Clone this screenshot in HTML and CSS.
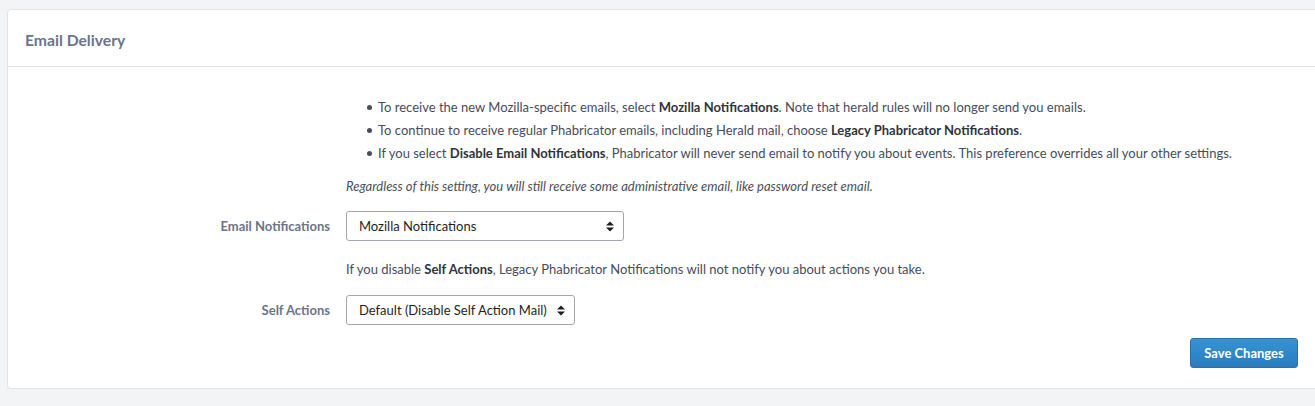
FILE: index.html
```html
<!DOCTYPE html>
<html>
<head>
<meta charset="utf-8">
<link rel="stylesheet" href="styles.css">
</head>
<body>
<div class="card">
  <div class="card-header">Email Delivery</div>
  <form class="card-body">
    <div class="row">
      <div class="label"></div>
      <div class="control">
        <ul class="bullets">
          <li>To receive the new Mozilla-specific emails, select <b>Mozilla Notifications</b>. Note that herald rules will no longer send you emails.</li>
          <li>To continue to receive regular Phabricator emails, including Herald mail, choose <b>Legacy Phabricator Notifications</b>.</li>
          <li>If you select <b>Disable Email Notifications</b>, Phabricator will never send email to notify you about events. This preference overrides all your other settings.</li>
        </ul>
        <p class="note">Regardless of this setting, you will still receive some administrative email, like password reset email.</p>
      </div>
    </div>
    <div class="row row-select">
      <label class="label">Email Notifications</label>
      <div class="control">
        <div class="select select-wide">
          <span>Mozilla Notifications</span>
          <svg class="arrows" width="8" height="11" viewBox="0 0 8 11"><path d="M0 4.5 L4 0.5 L8 4.5 Z M0 6.5 L4 10.5 L8 6.5 Z" fill="#1c1e22"/></svg>
        </div>
      </div>
    </div>
    <div class="row row-help">
      <div class="label"></div>
      <div class="control"><p class="help">If you disable <b>Self Actions</b>, Legacy Phabricator Notifications will not notify you about actions you take.</p></div>
    </div>
    <div class="row row-select">
      <label class="label">Self Actions</label>
      <div class="control">
        <div class="select">
          <span>Default (Disable Self Action Mail)</span>
          <svg class="arrows" width="8" height="11" viewBox="0 0 8 11"><path d="M0 4.5 L4 0.5 L8 4.5 Z M0 6.5 L4 10.5 L8 6.5 Z" fill="#1c1e22"/></svg>
        </div>
      </div>
    </div>
    <div class="actions">
      <button type="button" class="btn">Save Changes</button>
    </div>
  </form>
</div>
</body>
</html>
```

FILE: styles.css
```css
html, body {
  margin: 0;
  padding: 0;
}
body {
  background: #f3f4f6;
  font-family: Lato, "Open Sans", sans-serif;
  font-size: 13px;
  color: #464c5c;
  padding-top: 9px;
  padding-left: 7px;
  overflow: hidden;
}
.card {
  background: #fff;
  border: 1px solid #e2e3e7;
  border-radius: 4px;
  width: 1320px;
  height: 380px;
  box-sizing: border-box;
  box-shadow: 0 1px 1px rgba(0,0,0,0.03);
}
.card-header {
  height: 57px;
  box-sizing: border-box;
  border-bottom: 1px solid #e2e3e7;
  padding: 21px 0 0 17px;
  font-size: 15.7px;
  font-weight: bold;
  color: #6b748c;
  line-height: 18px;
}
.card-body {
  display: flex;
  flex-direction: column;
  padding-top: 29px;
}
.row {
  display: grid;
  grid-template-columns: 322px 1fr;
  column-gap: 16px;
  align-items: center;
}
.label {
  text-align: right;
  font-weight: bold;
  color: #6b748c;
}
.bullets {
  margin: 0;
  padding: 0 0 0 32px;
  line-height: 23px;
  list-style: none;
}
.bullets li {
  position: relative;
}
.bullets li::before {
  content: "";
  position: absolute;
  left: -11px;
  top: 9px;
  width: 5px;
  height: 5px;
  border-radius: 50%;
  background: #464c5c;
}
b {
  color: #2f333c;
}
.note {
  margin: 12px 0 0 0;
  font-style: italic;
  font-size: 13px;
  line-height: 18px;
  color: #4b4f59;
}
.row-select {
  margin-top: 16px;
}
.row-help {
  margin-top: 19px;
}
.help {
  margin: 0;
  line-height: 18px;
}
.row-help + .row-select {
  margin-top: 17px;
}
.select {
  display: inline-flex;
  align-items: center;
  justify-content: space-between;
  height: 30px;
  box-sizing: border-box;
  border: 1px solid #a1a6b0;
  border-radius: 3px;
  padding: 0 9px 0 12px;
  color: #1d1f24;
  background: #fff;
  gap: 10px;
}
.select-wide {
  width: 278px;
}
.select span {
  white-space: nowrap;
}
.actions {
  display: flex;
  justify-content: flex-end;
  padding-right: 28px;
  margin-top: 13px;
}
.btn {
  width: 108px;
  height: 30px;
  border: 1px solid #2b72ad;
  border-radius: 3px;
  background: linear-gradient(to bottom, #3593d6, #2a7cbd);
  color: #fff;
  font-family: Lato, "Open Sans", sans-serif;
  font-weight: bold;
  font-size: 13px;
  padding: 0;
}
```
